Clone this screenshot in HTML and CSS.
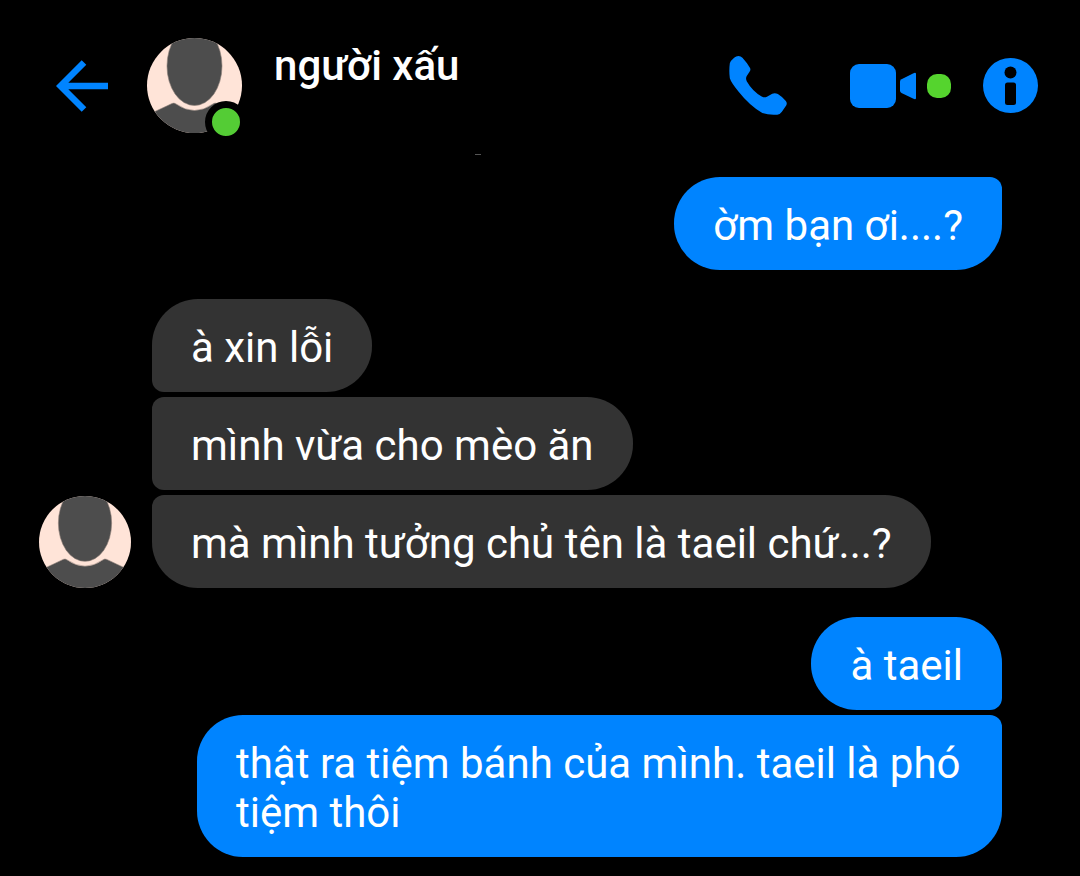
FILE: index.html
```
<!DOCTYPE html>
<html lang="vi">
<head>
<meta charset="utf-8">
<meta name="viewport" content="width=device-width, initial-scale=1.0">
<title>người xấu</title>
<link rel="stylesheet" href="styles.css">
</head>
<body>
<svg class="defs" aria-hidden="true">
  <symbol id="face" viewBox="0 0 95 95">
    <rect width="95" height="95" fill="#ffe4d8"/>
    <g fill="#4d4d4d" stroke="#8c7f78" stroke-width="0.6">
      <ellipse cx="47.5" cy="28" rx="27.5" ry="39.5"/>
      <path d="M-4 80 L8 73.5 L25 65.5 Q27 64.5 29 66 Q47.5 79 66 66 Q68 64.5 70 65.5 L87 73.5 L99 80 V99 H-4 Z"/>
    </g>
  </symbol>
</svg>

<header class="header">
  <button class="icon-btn" aria-label="Quay lại">
    <svg width="52" height="52" viewBox="0 0 52 52" fill="none" stroke="#0084ff" stroke-width="6.5">
      <path d="M28 2.5 L4.5 26 L28 49.5 M5 26 H52"/>
    </svg>
  </button>
  <div class="avatar-wrap">
    <svg class="avatar avatar-lg"><use href="#face"/></svg>
    <span class="online"></span>
  </div>
  <h1 class="name">người xấu</h1>
  <div class="actions">
    <button class="icon-btn" aria-label="Gọi thoại">
      <svg width="58" height="59" viewBox="0 0 174 178" fill="#0084ff">
        <path d="M28 0 Q35 0 40 5 Q54 20 63 36 Q66 42 61 48 L53 60 Q49 68 53 76 Q70 106 98 122 Q106 127 114 123 L130 114 Q138 110 147 115 Q160 123 171 136 Q176 143 172 149 L159 168 Q154 176 145 177 Q120 179 100 172 Q62 150 28 107 Q6 80 2 67 Q-1 45 2 22 Q4 14 15 5 Q21 0 28 0 Z"/>
      </svg>
    </button>
    <button class="icon-btn video-btn" aria-label="Gọi video">
      <svg width="66" height="44" viewBox="0 0 66 44" fill="#0084ff">
        <rect width="46" height="44" rx="9"/>
        <path d="M50 17.5 Q50 16 51.5 15.2 L63 9.4 Q66 8 66 10 V34 Q66 36 63 34.6 L51.5 29 Q50 28 50 26.5 Z"/>
      </svg>
      <span class="video-dot"></span>
    </button>
    <button class="icon-btn" aria-label="Thông tin">
      <svg width="55" height="55" viewBox="0 0 55 55">
        <circle cx="27.5" cy="27.5" r="27.5" fill="#0084ff"/>
        <circle cx="27.5" cy="14.5" r="6"/>
        <rect x="22" y="24.5" width="11" height="22.5" rx="2.5"/>
      </svg>
    </button>
  </div>
</header>
<div class="tick"></div>

<main class="chat">
  <div class="group sent">
    <p class="bubble last">ờm bạn ơi....?</p>
  </div>

  <div class="row">
    <svg class="avatar avatar-sm"><use href="#face"/></svg>
    <div class="group received">
      <p class="bubble first">à xin lỗi</p>
      <p class="bubble">mình vừa cho mèo ăn</p>
      <p class="bubble last">mà mình tưởng chủ tên là taeil chứ...?</p>
    </div>
  </div>

  <div class="group sent">
    <p class="bubble first">à taeil</p>
    <p class="bubble last">thật ra tiệm bánh của mình. taeil là phó tiệm thôi</p>
  </div>
</main>
</body>
</html>
```

FILE: styles.css
```
body {
  margin: 0;
  background: #000;
  color: #fff;
  font-family: Roboto, "Noto Sans", sans-serif;
}
.defs {
  position: absolute;
  width: 0;
  height: 0;
}
.header {
  display: flex;
  align-items: center;
  padding: 38px 42px 0 56px;
}
.icon-btn {
  display: flex;
  align-items: center;
  padding: 0;
  border: none;
  background: none;
  cursor: pointer;
}
.avatar-wrap {
  position: relative;
  margin-left: 39px;
}
.avatar {
  display: block;
  flex-shrink: 0;
  border-radius: 50%;
}
.avatar-lg {
  width: 95px;
  height: 95px;
}
.avatar-sm {
  width: 92px;
  height: 92px;
}
.online {
  position: absolute;
  right: -5px;
  bottom: -10px;
  width: 28px;
  height: 28px;
  border: 7px solid #000;
  border-radius: 50%;
  background: #54cc35;
}
.name {
  align-self: flex-start;
  margin: 0 0 0 32px;
  font-size: 42px;
  line-height: 56px;
  font-weight: 500;
}
.actions {
  display: flex;
  align-items: center;
  margin-left: auto;
}
.video-btn {
  gap: 11px;
  margin: 0 32px 0 63px;
}
.video-dot {
  width: 24px;
  height: 24px;
  border-radius: 10px;
  background: #55d42e;
}
.tick {
  width: 6px;
  height: 1px;
  margin: 21px 0 22px 44%;
  background: #555;
}

/* messages */
.chat {
  display: flex;
  flex-direction: column;
  gap: 29px;
  padding: 0 78px 19px 39px;
}
.row {
  display: flex;
  align-items: flex-end;
  gap: 21px;
}
.group {
  display: flex;
  flex-direction: column;
  gap: 5px;
}
.received {
  align-items: flex-start;
}
.sent {
  align-items: flex-end;
}
.bubble {
  box-sizing: border-box;
  max-width: 805px;
  margin: 0;
  padding: 24px 39px 20px;
  font-size: 42px;
  line-height: 49px;
}
.sent .bubble {
  background: #0084ff;
  border-radius: 46px 12px 12px 46px;
}
.received .bubble {
  background: #333;
  border-radius: 12px 46px 46px 12px;
}
.sent .first { border-top-right-radius: 46px; }
.sent .last { border-bottom-right-radius: 46px; }
.received .first { border-top-left-radius: 46px; }
.received .last { border-bottom-left-radius: 46px; }
```
